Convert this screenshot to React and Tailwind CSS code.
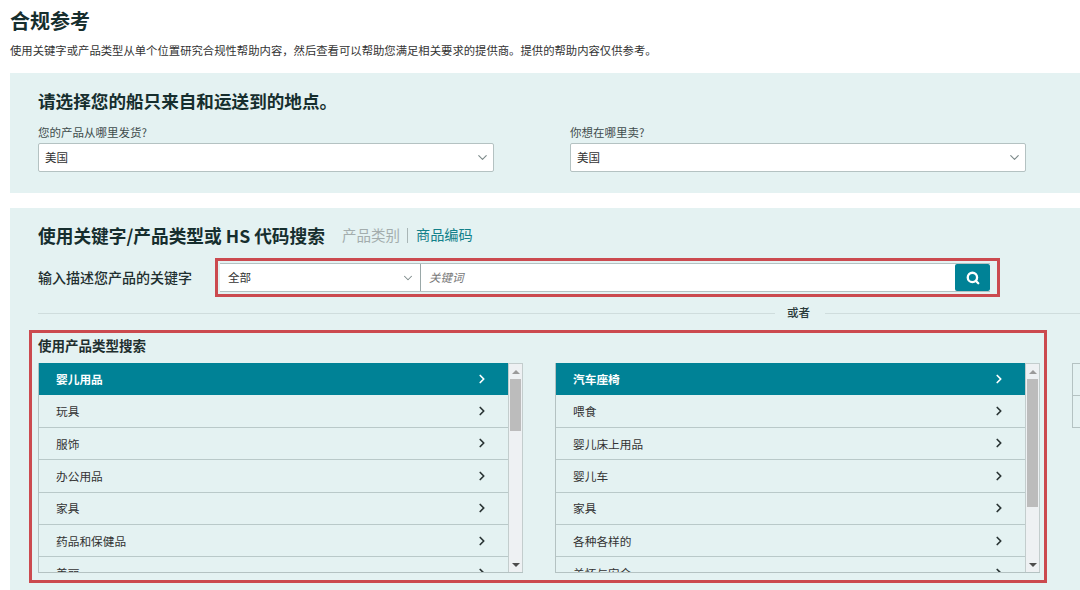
import { ChevronDown, ChevronRight, Search } from "lucide-react";

const leftItems = ["婴儿用品", "玩具", "服饰", "办公用品", "家具", "药品和保健品", "美丽"];
const rightItems = ["汽车座椅", "喂食", "婴儿床上用品", "婴儿车", "家具", "各种各样的", "关怀与安全"];

function CountrySelect({ label }) {
  return (
    <div className="w-[456px]">
      <div className="h-[16px] text-[11.5px] leading-[16px] text-[#3f4c4c]">{label}</div>
      <div className="mt-[3px] flex h-[29px] items-center justify-between rounded-[2px] border border-[#b4c2c2] bg-white pl-[6px] pr-[3px] text-[11.5px] text-[#333]">
        <span>美国</span>
        <ChevronDown size={15} strokeWidth={1.8} className="text-[#7d8a8a]" />
      </div>
    </div>
  );
}

function ListPanel({ items, thumbHeight }) {
  return (
    <div className="flex h-[210px] w-[485px] overflow-hidden border-b border-l border-[#b4c2c2]">
      <div className="min-w-0 flex-1">
        {items.map((item, index) => (
          <div
            key={item}
            className={
              index === 0
                ? "flex h-[32.4px] items-center justify-between bg-[#008296] pl-[17px] pr-[19px] text-[11.7px] font-bold text-white"
                : "flex h-[32.4px] items-center justify-between border-b border-[#b9c9c9] pl-[17px] pr-[19px] text-[11.7px] text-[#333]"
            }
          >
            <span>{item}</span>
            <ChevronRight size={14} strokeWidth={3} className={index === 0 ? "text-white" : "text-[#2b3535]"} />
          </div>
        ))}
      </div>
      <div className="flex w-[15px] shrink-0 flex-col border-x border-t border-[#c3cdcd] bg-[#eef1f3] px-px">
        <div className="flex h-[15px] shrink-0 items-center justify-center">
          <div className="h-0 w-0 border-x-[4px] border-b-[4px] border-x-transparent border-b-[#9a9a9a]" />
        </div>
        <div className={thumbHeight === "long" ? "h-[128px] bg-[#bcbcbc]" : "h-[52px] bg-[#bcbcbc]"} />
        <div className="mt-auto flex h-[15px] shrink-0 items-center justify-center">
          <div className="h-0 w-0 border-x-[4px] border-t-[4px] border-x-transparent border-t-[#4d4d4d]" />
        </div>
      </div>
    </div>
  );
}

export default function App() {
  return (
    <div className="h-[590px] w-[1080px] overflow-hidden bg-white pl-[10px] font-['Noto_Sans_CJK_SC','Liberation_Sans',sans-serif]">
      <h1 className="pt-[6px] text-[20px] leading-[30px] font-bold text-[#162e2e]">合规参考</h1>
      <p className="mt-[6px] h-[16px] text-[11.35px] leading-[16px] whitespace-nowrap text-[#333]">
        使用关键字或产品类型从单个位置研究合规性帮助内容，然后查看可以帮助您满足相关要求的提供商。提供的帮助内容仅供参考。
      </p>

      <section className="mt-[15px] h-[120px] bg-[#e4f2f2] pl-[28px] pt-[16px]">
        <h2 className="text-[17.6px] leading-[24px] font-bold text-[#162e2e]">请选择您的船只来自和运送到的地点。</h2>
        <div className="mt-[11px] flex gap-[76px]">
          <CountrySelect label="您的产品从哪里发货?" />
          <CountrySelect label="你想在哪里卖?" />
        </div>
      </section>

      <section className="mt-[15px] h-[382px] bg-[#e4f2f2] pl-[28px] pt-[15px]">
        <div className="flex h-[24px] items-center">
          <h2 className="text-[17.7px] leading-[24px] font-bold text-[#162e2e]">使用关键字/产品类型或 HS 代码搜索</h2>
          <span className="ml-[17px] text-[14.5px] text-[#a3adad]">产品类别</span>
          <span className="mx-[7.5px] h-[15px] w-px bg-[#a9b6b6]" />
          <span className="text-[14.2px] text-[#12808a]">商品编码</span>
        </div>

        <div className="mt-[11px] flex items-center">
          <span className="w-[177px] text-[14px] font-medium text-[#1f2f2f]">输入描述您产品的关键字</span>
          <div className="flex h-[39px] w-[785px] items-center border-[3px] border-[#cb4a4f] pl-[2px]">
            <div className="flex h-[29px] w-[770px] border-y border-[#b4c2c2] bg-white">
              <div className="flex w-[201px] items-center justify-between border-r border-[#9aa8a8] pl-[8px] pr-[5px] text-[11.5px] text-[#333]">
                <span>全部</span>
                <ChevronDown size={14} strokeWidth={1.8} className="text-[#7d8a8a]" />
              </div>
              <div className="flex flex-1 items-center pl-[8px] text-[11.5px] text-[#777] italic">关键词</div>
              <div className="flex w-[35px] items-center justify-center rounded-[2px] bg-[#008296]">
                <Search size={14} strokeWidth={4} className="text-white" />
              </div>
            </div>
          </div>
        </div>

        <div className="mt-[8px] flex h-[16px] items-center">
          <div className="h-px w-[737px] bg-[#cfdddd]" />
          <span className="w-[50px] pr-[3px] text-center text-[11.5px] font-medium text-[#2a3a3a]">或者</span>
          <div className="h-px flex-1 bg-[#cfdddd]" />
        </div>

        <div className="mt-[9px] -ml-[9px] flex items-start">
          <div className="h-[253px] w-[1018px] shrink-0 border-[3px] border-[#cb4a4f] pl-[6px] pt-[2px]">
            <h3 className="text-[13.5px] leading-[20px] font-bold text-[#1f2f2f]">使用产品类型搜索</h3>
            <div className="mt-[8px] flex gap-[32px]">
              <ListPanel items={leftItems} thumbHeight="short" />
              <ListPanel items={rightItems} thumbHeight="long" />
            </div>
          </div>
          <div className="mt-[33px] ml-[25px] w-[20px] border-l border-[#b4c2c2]">
            <div className="h-[33px] border-y border-[#b4c2c2]" />
            <div className="h-[32px] border-b border-[#b4c2c2]" />
          </div>
        </div>
      </section>
    </div>
  );
}
